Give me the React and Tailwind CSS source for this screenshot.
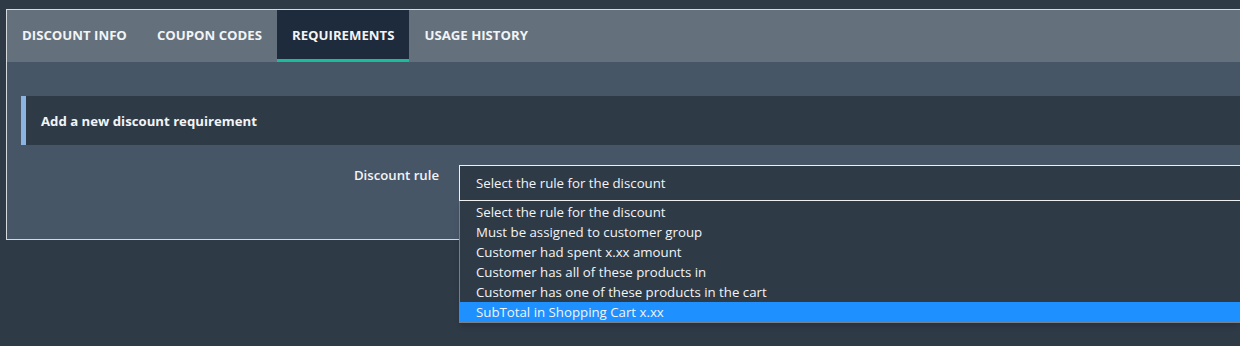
import React, { useState } from 'react';

const tabs = ['Discount info', 'Coupon codes', 'Requirements', 'Usage history'];

const rules = [
  'Select the rule for the discount',
  'Must be assigned to customer group',
  'Customer had spent x.xx amount',
  'Customer has all of these products in',
  'Customer has one of these products in the cart',
  'SubTotal in Shopping Cart x.xx',
];

export default function App() {
  const [active, setActive] = useState(2);
  const [hovered, setHovered] = useState(5);

  return (
    <div
      className="h-[346px] w-full overflow-hidden bg-[#2f3a47] pl-[6px] pt-[9px] text-[#f2f4f6]"
      style={{ fontFamily: '"Open Sans", "Noto Sans", sans-serif' }}
    >
      <div className="border border-r-0 border-[#d5dade] bg-[#475667]">
        {/* Tab strip */}
        <div className="flex h-[52px] bg-[#64707c]">
          {tabs.map((tab, i) => (
            <button
              key={tab}
              onClick={() => setActive(i)}
              className={`flex h-full items-center px-[15px] text-[13.2px] font-bold uppercase ${
                active === i ? 'border-b-[3px] border-[#1abc9c] bg-[#1e2b3c] pt-[3px]' : ''
              }`}
            >
              {tab}
            </button>
          ))}
        </div>

        <div className="pb-[38px] pl-[14px] pt-[34px]">
          {/* Section header */}
          <div className="flex h-[49px] items-center border-l-[5px] border-[#8cb4e2] bg-[#2f3a47] pl-[15px] pt-[2px] text-[13.2px] font-bold">
            Add a new discount requirement
          </div>

          {/* Rule selector */}
          <div className="mt-[20px] flex">
            <label className="w-[418px] pt-[1px] text-right text-[13.2px] font-semibold">Discount rule</label>
            <div className="relative ml-[20px] flex-1">
              <div className="flex h-[36px] items-center border border-r-0 border-[#eef0f2] bg-[#2f3a47] pl-[16px] pt-[2px] text-[13.25px]">
                {rules[0]}
              </div>
              <ul className="absolute left-0 right-0 top-full z-10 border border-r-0 border-t-0 border-[#7a7f85] bg-[#2f3a47] pt-[1px] text-[13.25px] shadow-md">
                {rules.map((rule, i) => (
                  <li
                    key={rule}
                    onMouseEnter={() => setHovered(i)}
                    className={`flex h-[20px] items-center pl-[16px] pt-[2px] ${hovered === i ? 'bg-[#1e90ff]' : ''}`}
                  >
                    {rule}
                  </li>
                ))}
              </ul>
            </div>
          </div>
        </div>
      </div>
    </div>
  );
}
